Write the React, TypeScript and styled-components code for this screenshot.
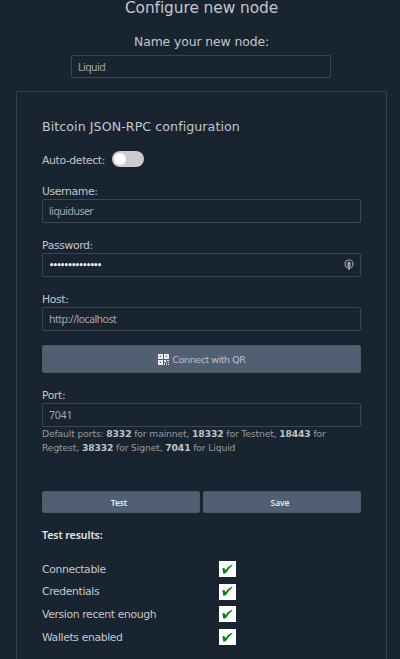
import React from "react";
import styled, { createGlobalStyle } from "styled-components";

const GlobalStyle = createGlobalStyle`
  * { box-sizing: border-box; }
  html, body { margin: 0; height: 659px; overflow: hidden; background: #192431; }
  body { font-family: "DejaVu Sans", sans-serif; color: #c3c7cb; font-size: 10.8px; letter-spacing: -0.36px; }
`;

const Page = styled.main`
  width: 400px;
  height: 659px;
  overflow: hidden;
  display: flex;
  flex-direction: column;

  & > * { flex-shrink: 0; }
`;

const Title = styled.h1`
  margin: -1px 0 23px 3px;
  text-align: center;
  font-size: 15.4px;
  letter-spacing: -0.08px;
  font-weight: 400;
  line-height: 19px;
  height: 18px;
  white-space: nowrap;
`;

const NameLabel = styled.label`
  margin: -7px 0 0 3px;
  text-align: center;
  font-size: 12.4px;
  letter-spacing: -0.1px;
  line-height: 18px;
  height: 22px;
  white-space: nowrap;
`;

const Field = styled.div<{ $width?: number; $height?: number }>`
  display: flex;
  align-items: center;
  justify-content: space-between;
  width: ${(p) => (p.$width ? `${p.$width}px` : "100%")};
  height: ${(p) => p.$height ?? 24}px;
  border: 1px solid #3b4652;
  border-radius: 2px;
  padding: 0 6px;
`;

const Input = styled.input`
  flex: 1;
  min-width: 0;
  height: 20px;
  padding: 0;
  border: 0;
  outline: 0;
  background: transparent;
  color: #a2a7ac;
  font-family: "Noto Sans", sans-serif;
  font-size: 10.5px;
  letter-spacing: -0.52px;

  &[type="password"] {
    color: #f4f5f6;
    font-family: "DejaVu Sans", sans-serif;
    font-size: 8px;
    font-weight: 700;
    letter-spacing: -1.42px;
  }

  &[inputmode="numeric"] { letter-spacing: -0.2px; }
`;

const NameRow = styled.div`
  padding-left: 71px;
  height: 36px;
`;

const Card = styled.section`
  width: 371px;
  height: 600px;
  margin-left: 16px;
  padding: 25px 25px 0;
  border: 1px solid #36414d;
  border-radius: 2px;
`;

const Heading = styled.h2`
  margin: 0;
  height: 34px;
  font-size: 12.6px;
  letter-spacing: 0.08px;
  line-height: 19px;
  font-weight: 400;
  white-space: nowrap;
`;

const ToggleRow = styled.div`
  display: flex;
  gap: 7px;
  height: 32px;
  line-height: 20px;
`;

const Toggle = styled.span`
  width: 32px;
  height: 16px;
  border-radius: 8px;
  background: #ccc;
  padding: 2px;

  &::before {
    content: "";
    display: block;
    width: 12px;
    height: 12px;
    border-radius: 50%;
    background: #fff;
  }
`;

const Group = styled.div<{ $height: number }>`
  height: ${(p) => p.$height}px;
`;

const Label = styled.label`
  display: block;
  height: 16px;
  line-height: 18px;
  white-space: nowrap;
`;

const Button = styled.button<{ $tall?: boolean }>`
  display: flex;
  align-items: center;
  justify-content: center;
  gap: 4px;
  flex: 1;
  width: 100%;
  height: ${(p) => (p.$tall ? 28 : 22)}px;
  padding: ${(p) => (p.$tall ? "0" : "0 4px 0 0")};
  border: 1px solid #4b5a6b;
  border-radius: 2px;
  background: #506072;
  color: ${(p) => (p.$tall ? "#b9c0c7" : "#e4e7e9")};
  font-family: ${(p) => (p.$tall ? '"DejaVu Sans"' : '"Noto Sans"')}, sans-serif;
  font-size: ${(p) => (p.$tall ? 9.4 : 8.5)}px;
  font-weight: ${(p) => (p.$tall ? 400 : 600)};
  letter-spacing: ${(p) => (p.$tall ? -0.38 : -0.1)}px;
`;

const Hint = styled.p`
  margin: 0;
  height: 64px;
  font-size: 9.2px;
  letter-spacing: -0.12px;
  line-height: 14px;
  color: #969b9f;
  white-space: nowrap;

  b { color: #c0c3c6; }
`;

const Actions = styled.div`
  display: flex;
  gap: 3px;
  height: 35px;
`;

const ResultsTitle = styled.h3`
  margin: 0;
  height: 32px;
  color: #e2e4e6;
  font-family: "Noto Sans", sans-serif;
  font-size: 10.5px;
  letter-spacing: -0.05px;
  line-height: 19px;
  font-weight: 600;
`;

const Result = styled.div`
  display: grid;
  grid-template-columns: 177px 17px;
  align-items: center;
  height: 22.6px;
`;

const CheckBox = styled.span`
  display: flex;
  align-items: center;
  justify-content: center;
  width: 17px;
  height: 16px;
  background: #fff;
`;

const QrIcon = () => (
  <svg width="11" height="11" viewBox="0 0 11 11" fill="#e9ecee">
    <path fillRule="evenodd" d="M0 0h5v5H0zM1.8 1.8v1.2h1.2V1.8zM6 0h5v5H6zM7.8 1.8v1.2h1.2V1.8zM0 6h5v5H0zM1.8 7.8v1.2h1.2V7.8z" />
    <path d="M6 6h2v2H6zM9 6h2v1H9zM8 8h1v1H8zM10 8h1v1h-1zM6 9h1v2H6zM8 10h1v1H8zM10 10h1v1h-1z" />
  </svg>
);

const KeyIcon = () => (
  <svg width="10" height="12" viewBox="0 0 10 12">
    <circle cx="5" cy="5" r="4" fill="none" stroke="#999da1" strokeWidth="1.2" />
    <circle cx="5" cy="4.3" r="1.5" fill="#b1b4b6" />
    <path d="M3.2 5.2h3.6v2H6v3.1L5 11.3 4 10.3V7.2h-.8z" fill="#989c9f" />
  </svg>
);

const Check = () => (
  <svg width="11" height="11" viewBox="0 0 11 11">
    <path d="M.3 4.7Q1.4 3.4 2.7 4.4L3.4 6.2Q6 2.4 10.2 .6L10.5 1.3Q7.1 4.2 4.4 8.5Q3 10 1.2 9.5Q1.2 7.3.3 4.7Z" fill="#07800b" />
  </svg>
);

const results = ["Connectable", "Credentials", "Version recent enough", "Wallets enabled"];

export default function App() {
  return (
    <Page>
      <GlobalStyle />
      <Title>Configure new node</Title>
      <NameLabel htmlFor="name">Name your new node:</NameLabel>
      <NameRow>
        <Field $width={260} $height={23}>
          <Input id="name" defaultValue="Liquid" />
        </Field>
      </NameRow>
      <Card>
        <Heading>Bitcoin JSON-RPC configuration</Heading>
        <ToggleRow>
          <span>Auto-detect:</span>
          <Toggle role="switch" aria-checked={false} />
        </ToggleRow>
        <Group $height={54}>
          <Label htmlFor="user">Username:</Label>
          <Field><Input id="user" defaultValue="liquiduser" /></Field>
        </Group>
        <Group $height={54}>
          <Label htmlFor="password">Password:</Label>
          <Field>
            <Input id="password" type="password" defaultValue="liquidpassword" />
            <KeyIcon />
          </Field>
        </Group>
        <Group $height={54}>
          <Label htmlFor="host">Host:</Label>
          <Field><Input id="host" defaultValue="http://localhost" /></Field>
        </Group>
        <Group $height={42}>
          <Button $tall><QrIcon />Connect with QR</Button>
        </Group>
        <Group $height={40}>
          <Label htmlFor="port">Port:</Label>
          <Field><Input id="port" inputMode="numeric" defaultValue="7041" /></Field>
        </Group>
        <Hint>
          Default ports: <b>8332</b> for mainnet, <b>18332</b> for Testnet, <b>18443</b> for<br />
          Regtest, <b>38332</b> for Signet, <b>7041</b> for Liquid
        </Hint>
        <Actions><Button>Test</Button><Button>Save</Button></Actions>
        <ResultsTitle>Test results:</ResultsTitle>
        {results.map((name) => (
          <Result key={name}>
            <span>{name}</span>
            <CheckBox><Check /></CheckBox>
          </Result>
        ))}
      </Card>
    </Page>
  );
}
